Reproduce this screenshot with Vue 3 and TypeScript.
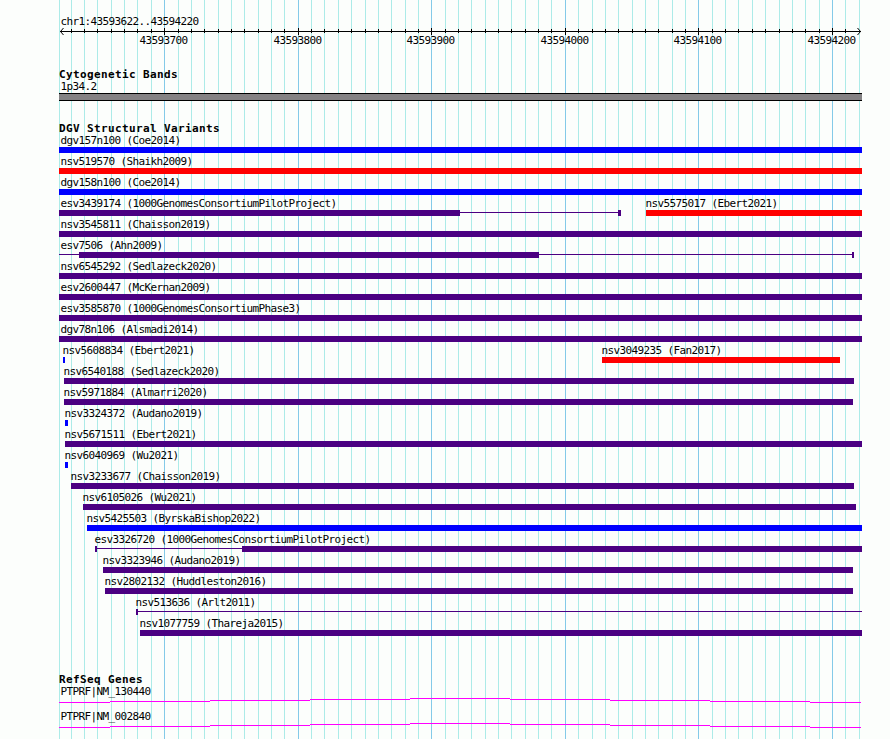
<script setup lang="ts">
type Kind = 'gain' | 'loss' | 'complex'

type Part = {
    from: number,
    to: number,
    thin?: boolean,
}

type Variant = {
    label: string,
    kind: Kind,
    parts: Part[],
}

// all x values are pixels on the browser canvas
const LEFT = 59
const RIGHT = 862
const HEIGHT = 739
const STEP = 13.3555
const FIRST_MAJOR = 164.68

const one = (label: string, kind: Kind, from = LEFT, to = RIGHT): Variant => ({
    label,
    kind,
    parts: [{ from, to }],
})

const gridLines = [{ x: LEFT, major: false, tick: false }]
for (let i = -7; i <= 52; i++) {
    gridLines.push({
        x: Math.floor(FIRST_MAJOR + i * STEP),
        major: i % 10 === 0,
        tick: i < 52,
    })
}

const positions = gridLines
    .filter(line => line.major)
    .map((line, i) => ({ x: line.x, text: String(43593700 + i * 100) }))

const rows: Variant[][] = [
    [one('dgv157n100 (Coe2014)', 'gain')],
    [one('nsv519570 (Shaikh2009)', 'loss')],
    [one('dgv158n100 (Coe2014)', 'gain')],
    [
        {
            label: 'esv3439174 (1000GenomesConsortiumPilotProject)',
            kind: 'complex',
            parts: [{ from: 59, to: 460 }, { from: 460, to: 618, thin: true }, { from: 618, to: 621 }],
        },
        one('nsv5575017 (Ebert2021)', 'loss', 646),
    ],
    [one('nsv3545811 (Chaisson2019)', 'complex')],
    [
        {
            label: 'esv7506 (Ahn2009)',
            kind: 'complex',
            parts: [
                { from: 59, to: 79, thin: true },
                { from: 79, to: 539 },
                { from: 539, to: 852, thin: true },
                { from: 852, to: 854 },
            ],
        },
    ],
    [one('nsv6545292 (Sedlazeck2020)', 'complex')],
    [one('esv2600447 (McKernan2009)', 'complex')],
    [one('esv3585870 (1000GenomesConsortiumPhase3)', 'complex')],
    [one('dgv78n106 (Alsmadi2014)', 'complex')],
    [one('nsv5608834 (Ebert2021)', 'gain', 63, 65), one('nsv3049235 (Fan2017)', 'loss', 602, 840)],
    [one('nsv6540188 (Sedlazeck2020)', 'complex', 64, 854)],
    [one('nsv5971884 (Almarri2020)', 'complex', 64, 853)],
    [one('nsv3324372 (Audano2019)', 'gain', 65, 68)],
    [one('nsv5671511 (Ebert2021)', 'complex', 65)],
    [one('nsv6040969 (Wu2021)', 'gain', 65, 68)],
    [one('nsv3233677 (Chaisson2019)', 'complex', 71, 854)],
    [one('nsv6105026 (Wu2021)', 'complex', 83, 856)],
    [one('nsv5425503 (ByrskaBishop2022)', 'gain', 87)],
    [
        {
            label: 'esv3326720 (1000GenomesConsortiumPilotProject)',
            kind: 'complex',
            parts: [{ from: 95, to: 97 }, { from: 97, to: 242, thin: true }, { from: 242, to: 862 }],
        },
    ],
    [one('nsv3323946 (Audano2019)', 'complex', 103, 853)],
    [one('nsv2802132 (Huddleston2016)', 'complex', 105, 853)],
    [
        {
            label: 'nsv513636 (Arlt2011)',
            kind: 'complex',
            parts: [{ from: 136, to: 138 }, { from: 138, to: 862, thin: true }],
        },
    ],
    [one('nsv1077759 (Thareja2015)', 'complex', 140)],
]

const genes = ['PTPRF|NM_130440', 'PTPRF|NM_002840']

// intron hat, drawn as one pixel steps
const intron = [59, 110, 210, 310, 410, 510, 610, 710, 810].map((x, i, all) => ({
    x: x - LEFT,
    width: (all[i + 1] ?? 861) - x,
    y: Math.abs(4 - i),
}))

const startOf = (v: Variant) => v.parts[0].from
const endOf = (v: Variant) => v.parts[v.parts.length - 1].to

function gapBefore(row: Variant[], i: number) {
    return startOf(row[i]) - (i ? endOf(row[i - 1]) : LEFT)
}
</script>

<template>
    <main class="browser">
        <svg class="grid" width="890" :height="HEIGHT" shape-rendering="crispEdges">
            <rect
                v-for="line in gridLines"
                :key="line.x"
                :class="line.major ? 'major' : 'minor'"
                :x="line.x"
                y="0"
                width="1"
                :height="HEIGHT"
            />
        </svg>

        <div class="tracks">
            <svg class="ruler" width="890" height="66">
                <text x="60.4" y="25">chr1:43593622..43594220</text>
                <g shape-rendering="crispEdges">
                    <rect x="60" y="31" width="801" height="1" />
                    <template v-for="line in gridLines" :key="line.x">
                        <rect
                            v-if="line.tick && line.x > LEFT"
                            :x="line.x"
                            :y="line.major ? 28 : 29"
                            width="1"
                            :height="line.major ? 7 : 4"
                        />
                    </template>
                </g>
                <path d="M63.5 28 60.5 31.5 63.5 35M857.5 28 860.5 31.5 857.5 35" />
                <text v-for="p in positions" :key="p.x" :x="p.x - 24.6" y="44">{{ p.text }}</text>
            </svg>

            <section class="cytobands">
                <h2>Cytogenetic Bands</h2>
                <div class="label clipped">1p34.2</div>
                <div class="band"></div>
            </section>

            <section class="variants">
                <h2>DGV Structural Variants</h2>
                <div v-for="(row, r) in rows" :key="r" class="row">
                    <div
                        v-for="(v, i) in row"
                        :key="v.label"
                        class="variant"
                        :class="v.kind"
                        :style="{ marginLeft: gapBefore(row, i) + 'px', width: endOf(v) - startOf(v) + 'px' }"
                    >
                        <div class="label" :class="{ clipped: startOf(v) === LEFT }">{{ v.label }}</div>
                        <div class="glyph">
                            <span
                                v-for="part in v.parts"
                                :key="part.from"
                                :class="{ thin: part.thin }"
                                :style="{ width: part.to - part.from + 'px' }"
                            ></span>
                        </div>
                    </div>
                </div>
            </section>

            <section class="genes">
                <h2>RefSeq Genes</h2>
                <div v-for="gene in genes" :key="gene" class="gene">
                    <div class="label clipped">{{ gene }}</div>
                    <svg width="803" height="10" shape-rendering="crispEdges">
                        <rect v-for="s in intron" :key="s.x" :x="s.x" :y="s.y" :width="s.width" height="1" />
                    </svg>
                </div>
            </section>
        </div>
    </main>
</template>

<style>
body {
    margin: 0;
    background: #fcfefc;
}
</style>

<style scoped>
.browser {
    display: grid;
    width: 890px;
    height: 739px;
    overflow: hidden;
    background: #fcfefc;
    color: #000;
    font-family: "DejaVu Sans Mono", "Liberation Mono", monospace;
    font-size: 11px;
    letter-spacing: -0.622px;
}

.grid,
.tracks {
    grid-area: 1 / 1;
    display: block;
}

.grid .minor {
    fill: #acebe8;
}

.grid .major {
    fill: #84cae8;
}

.tracks {
    position: relative;
}

.ruler {
    display: block;
}

.ruler path {
    fill: none;
    stroke: #000;
}

section {
    width: 803px;
    margin-left: 59px;
}

h2 {
    box-sizing: border-box;
    margin: 0;
    height: 12px;
    padding-top: 2px;
    font-size: 11px;
    line-height: 14px;
    letter-spacing: 0.378px;
    white-space: pre;
}

.label {
    box-sizing: border-box;
    height: 15px;
    padding-top: 2px;
    margin-left: -0.6px;
    line-height: 14px;
    white-space: nowrap;
}

.label.clipped {
    margin-left: 1.4px;
}

.cytobands {
    height: 54px;
}

.cytobands .band {
    box-sizing: border-box;
    height: 8px;
    border: solid #000;
    border-width: 1px 0;
    background: #848284;
}

.variants {
    height: 551px;
}

.row {
    display: flex;
    height: 21px;
}

.variant {
    flex: none;
}

.glyph {
    display: flex;
    height: 6px;
}

.glyph span {
    height: 6px;
    background: currentColor;
}

.glyph .thin {
    height: 1px;
    margin-top: 2px;
}

.gain .glyph {
    color: #0000ff;
}

.loss .glyph {
    color: #ff0000;
}

.complex .glyph {
    color: #4b0082;
}

.gene {
    height: 25px;
}

.gene svg {
    display: block;
    fill: #ff00ff;
}
</style>
